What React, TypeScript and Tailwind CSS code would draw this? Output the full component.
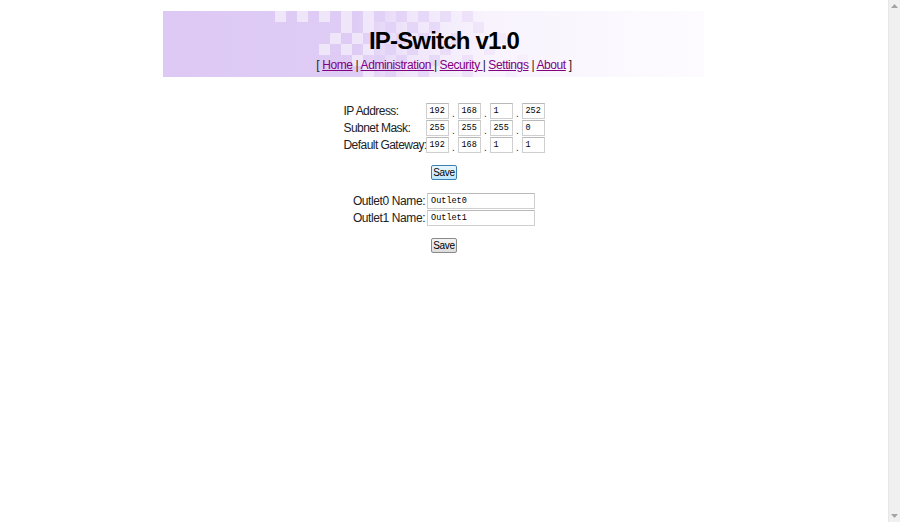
import React from 'react';

const ipRows = [
  { label: 'IP Address:', values: ['192', '168', '1', '252'] },
  { label: 'Subnet Mask:', values: ['255', '255', '255', '0'] },
  { label: 'Default Gateway:', values: ['192', '168', '1', '1'] },
];

const outlets = ['Outlet0', 'Outlet1'];

// light squares over the purple half, purple squares fading into the white half
const lightSquares: [number, number[]][] = [
  [0, [0, 2, 4, 6, 8]],
  [1, [6, 8]],
  [2, [5, 7]],
  [3, [4, 6, 8]],
  [4, [7]],
  [5, [8]],
];
const purpleSquares: [number, number[]][] = [
  [0, [9, 11, 13, 15, 17]],
  [1, [10, 12, 14, 18]],
  [2, [9, 11, 13, 16, 20]],
  [3, [10, 12, 15, 19]],
  [4, [9, 11, 14, 17, 22]],
  [5, [10, 13, 17, 21]],
];

export default function App() {
  return (
    <div className="flex w-full h-[522px] bg-white overflow-hidden" style={{ fontFamily: '"Liberation Sans", Arial, sans-serif' }}>
      <div className="flex-1 flex flex-col">
        {/* Header banner */}
        <div className="relative w-[562px] h-[66px] mx-auto mt-[11px]">
          <BannerArt />
          <div className="relative flex flex-col items-center">
            <h1 className="text-[24px] font-bold text-black tracking-[-0.8px] leading-none mt-[18px]">IP-Switch v1.0</h1>
            <nav className="text-[12px] tracking-[-0.4px] text-[#222] leading-none mt-[6px]">
              [ <a className="text-[#800080] underline">Home</a> | <a className="text-[#800080] underline">Administration </a>|{' '}
              <a className="text-[#800080] underline">Security </a>| <a className="text-[#800080] underline">Settings</a> |{' '}
              <a className="text-[#800080] underline">About</a> ]
            </nav>
          </div>
        </div>

        {/* Network settings */}
        <div className="mt-[26px] mx-auto grid grid-cols-[82px_auto] gap-y-[1px] text-[12px] tracking-[-0.55px] text-[#222]">
          {ipRows.map((row) => (
            <React.Fragment key={row.label}>
              <div className="h-[16px] flex items-center whitespace-nowrap">{row.label}</div>
              <div className="flex items-end h-[16px]">
                {row.values.map((v, i) => (
                  <React.Fragment key={i}>
                    {i > 0 && <span className="w-[9px] text-center text-[10px] leading-[10px]">.</span>}
                    <BoxInput value={v} width="w-[23px]" />
                  </React.Fragment>
                ))}
              </div>
            </React.Fragment>
          ))}
        </div>
        <div className="flex justify-center mt-[12px]">
          <SaveButton active />
        </div>

        {/* Outlet names */}
        <div className="mt-[13px] flex flex-col items-center gap-y-[1px] text-[12px] tracking-[-0.4px] text-[#222]">
          {outlets.map((name, i) => (
            <div key={name} className="flex items-center h-[16px] gap-[2px] whitespace-nowrap">
              <span>Outlet{i} Name:</span>
              <BoxInput value={name} width="w-[108px]" />
            </div>
          ))}
        </div>
        <div className="flex justify-center mt-[12px]">
          <SaveButton />
        </div>
      </div>

      {/* Scrollbar */}
      <div className="w-[12px] h-full bg-[#f0f0f0] border-l border-[#e6e6e6] flex flex-col items-center justify-between py-[4px]">
        <svg width="7" height="4" viewBox="0 0 7 4"><path d="M0 4 L3.5 0 L7 4 Z" fill="#a3a3a3" /></svg>
        <svg width="7" height="4" viewBox="0 0 7 4"><path d="M0 0 L3.5 4 L7 0 Z" fill="#a3a3a3" /></svg>
      </div>
    </div>
  );
}

function BoxInput({ value, width }: { value: string; width: string }) {
  return (
    <div
      className={`${width} h-[16px] border border-[#cfcfcf] border-t-[#b9b9b9] bg-white px-[3px] flex items-center text-[8.5px] text-black tracking-normal`}
      style={{ fontFamily: '"Liberation Mono", "DejaVu Sans Mono", monospace' }}
    >
      {value}
    </div>
  );
}

function SaveButton({ active = false }: { active?: boolean }) {
  return (
    <button
      className={`w-[26px] h-[15px] rounded-[2px] border text-[10px] leading-none tracking-[-0.3px] text-black ${
        active
          ? 'border-[#3c7fb1] bg-gradient-to-b from-[#eaf6fd] to-[#bee6fd]'
          : 'border-[#8a8a8a] bg-gradient-to-b from-[#f4f4f4] to-[#dcdcdc]'
      }`}
    >
      Save
    </button>
  );
}

function BannerArt() {
  return (
    <svg className="absolute left-0 top-0" width="541" height="66" viewBox="0 0 541 66">
      <defs>
        <linearGradient id="bannerBg" x1="0" y1="0" x2="1" y2="0">
          <stop offset="0" stopColor="#ddc9f4" />
          <stop offset="0.36" stopColor="#dfccf5" />
          <stop offset="0.45" stopColor="#efe6fa" />
          <stop offset="0.6" stopColor="#f8f3fd" />
          <stop offset="1" stopColor="#fdfbff" />
        </linearGradient>
      </defs>
      <rect width="541" height="66" fill="url(#bannerBg)" />
      {lightSquares.map(([r, cols]) =>
        cols.map((c) => (
          <rect key={`l${r}-${c}`} x={112 + c * 11} y={r * 11} width="11" height="11" fill="#f1e9fb" opacity={0.9} />
        ))
      )}
      {purpleSquares.map(([r, cols]) =>
        cols.map((c) => (
          <rect
            key={`p${r}-${c}`}
            x={112 + c * 11}
            y={r * 11}
            width="11"
            height="11"
            fill="#e2d1f6"
            opacity={Math.max(0.15, 1 - (c - 9) / 14)}
          />
        ))
      )}
    </svg>
  );
}
